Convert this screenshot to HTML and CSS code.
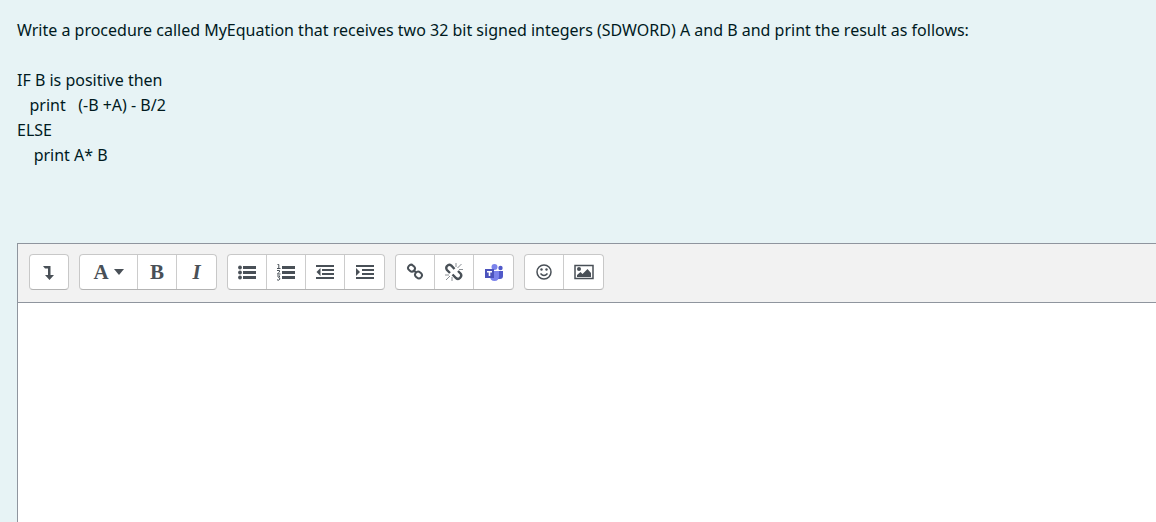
FILE: index.html
```
<!DOCTYPE html>
<html lang="en">
    <head>
        <title>Essay question</title>
        <meta charset="utf-8">
        <meta name="viewport" content="width=device-width, initial-scale=1">
        <link rel="stylesheet" href="styles.css">
    </head>

    <body>
        <div class="question">
            <p>Write a procedure called MyEquation that receives two 32 bit signed integers (SDWORD) A and B and print the result as follows:</p>
            <p class="code">IF B is positive then
   print   (-B +A) - B/2
ELSE
    print A* B</p>
        </div>

        <div class="editor">
            <div class="toolbar" role="toolbar" aria-label="Editor toolbar">
                <div class="group">
                    <button type="button" title="Show more buttons">
                        <svg width="18" height="18" viewBox="0 0 18 18"><path d="M3 3h7.500v9H14l-4.500 5L5 12h3V5.500H5z"/></svg>
                    </button>
                </div>
                <div class="group">
                    <button type="button" class="wide" title="Paragraph styles"><span class="letter">A</span><span class="caret"></span></button>
                    <button type="button" title="Bold"><span class="letter">B</span></button>
                    <button type="button" title="Italic"><span class="letter italic">I</span></button>
                </div>
                <div class="group">
                    <button type="button" title="Unordered list">
                        <svg width="20" height="18" viewBox="0 0 20 18"><path d="M6 3h13v3H6zM6 8h13v3H6zM6 13h13v3H6z"/><circle cx="3" cy="4.5" r="1.9"/><circle cx="3" cy="9.5" r="1.9"/><circle cx="3" cy="14.5" r="1.9"/></svg>
                    </button>
                    <button type="button" title="Ordered list">
                        <svg width="20" height="18" viewBox="0 0 20 18"><path d="M6 3h13v3H6zM6 8h13v3H6zM6 13h13v3H6z"/><path class="line" d="M1.5 1.500h1.300v4M1 5.500h3.500M1 7.500h2.500v1.500L1.300 11H4.500M1 13h3L2.500 14.500q1.700 0 1.300 1.700T1 16.800"/></svg>
                    </button>
                    <button type="button" title="Outdent">
                        <svg width="20" height="18" viewBox="0 0 20 18"><path d="M1 2h18v2H1zM7 6h12v2H7zM7 10h12v2H7zM1 14h18v2H1zM5.500 5v8L1.500 9z"/></svg>
                    </button>
                    <button type="button" title="Indent">
                        <svg width="20" height="18" viewBox="0 0 20 18"><path d="M1 2h18v2H1zM7 6h12v2H7zM7 10h12v2H7zM1 14h18v2H1zM1 5v8l4-4z"/></svg>
                    </button>
                </div>
                <div class="group">
                    <button type="button" title="Link">
                        <svg width="18" height="18" viewBox="0 0 18 18"><g class="thick"><rect x="2" y="2.200" width="7" height="6" rx="3" transform="rotate(42 5.500 5.200)"/><rect x="9" y="9" width="7" height="6" rx="3" transform="rotate(42 12.500 12)"/><path d="M7.500 7l3 3"/></g></svg>
                    </button>
                    <button type="button" title="Unlink">
                        <svg width="18" height="18" viewBox="0 0 18 18"><path class="heavy" d="M5 10L2 7Q.5 5 2 3q2-2 4.200-.5L9.500 6M13 8l2.500 2.500q1.700 2-.3 4.200t-4.200.3L7.500 11.500"/><path class="ray" d="M11 4V0M12.500 5l4-4M14 6.500h4M4 12H0M5 13l-4 4M7 14v4"/></svg>
                    </button>
                    <button type="button" title="Teams meeting">
                        <svg width="20" height="18" viewBox="0 0 20 18"><circle cx="16.500" cy="5" r="2.200" fill="#5059c9"/><path d="M13 8h6v5q0 3-3 3h-3z" fill="#5059c9"/><circle cx="10.500" cy="4" r="3" fill="#7b83eb"/><path d="M6 8h9v5q0 5-4.500 5T6 13z" fill="#7b83eb"/><path d="M1 6h9v9H1z" fill="#4b53bc"/><path d="M3 8h5v1.500H6.300V13H4.700V9.500H3z" fill="#fff"/></svg>
                    </button>
                </div>
                <div class="group">
                    <button type="button" title="Emoji picker">
                        <svg width="18" height="18" viewBox="0 0 18 18"><circle class="ring" cx="9" cy="9" r="7"/><circle cx="6.500" cy="6.500" r="1.200"/><circle cx="11.500" cy="6.500" r="1.200"/><path class="ring" d="M5.500 10.500q3.500 4 7 0"/></svg>
                    </button>
                    <button type="button" title="Insert image">
                        <svg width="20" height="18" viewBox="0 0 20 18"><path class="ring" d="M1 2.500h18v13H1z"/><circle cx="5" cy="6" r="2"/><path d="M3 14v-2l3.500-3 2 2 5-5 3.500 4v4z"/></svg>
                    </button>
                </div>
            </div>
            <textarea class="answer" aria-label="Answer text"></textarea>
        </div>
    </body>
</html>
```
FILE: styles.css
```
* {
    box-sizing: border-box;
}
body {
    display: flex;
    flex-direction: column;
    min-height: 100vh;
    margin: 0;
    padding: 18px 0 0 17px;
    background-color: #e7f3f5;
    color: #001a1e;
    font-family: "Segoe UI", "Noto Sans", sans-serif;
    font-size: 16px;
    line-height: 25px;
}
.question {
    margin-bottom: 75px;
}
.question p {
    margin: 0 0 25px;
}
.question .code {
    margin: 0;
    white-space: pre-wrap;
}
.editor {
    display: flex;
    flex: 1;
    flex-direction: column;
    border-top: 1px solid #8f959e;
    border-left: 1px solid #8f959e;
}
.toolbar {
    display: flex;
    flex-wrap: wrap;
    gap: 10px;
    padding: 10px 11px 12px;
    border-bottom: 1px solid #8f959e;
    background-color: #f2f2f2;
}
.group {
    display: flex;
    border: 1px solid #c8c8c8;
    border-bottom-color: #b3b3b3;
    border-radius: 4px;
    background-color: #fff;
}
.group button {
    display: flex;
    align-items: center;
    justify-content: center;
    width: 39px;
    height: 34px;
    padding: 0;
    border: 0;
    border-right: 1px solid #ccc;
    background: none;
    color: #495057;
    cursor: pointer;
}
.group button:last-child {
    border-right: 0;
}
.group button:only-child {
    width: 38px;
}
.group .wide {
    gap: 5px;
    width: 58px;
}
.letter {
    font-family: "Liberation Serif", serif;
    font-size: 21px;
    font-weight: bold;
    line-height: 24px;
}
.italic {
    font-style: italic;
}
.caret {
    border: 5px solid transparent;
    border-top: 6px solid #495057;
    border-bottom: 0;
}
svg {
    fill: #495057;
}
.line, .ring, .thick, .heavy, .ray {
    fill: none;
    stroke: #495057;
}
.ring {
    stroke-width: 1.5;
}
.thick {
    stroke-width: 2;
}
.heavy {
    stroke-width: 2.4;
}
.ray {
    stroke: #8a8f94;
}
.answer {
    flex: 1;
    min-height: 200px;
    padding: 8px;
    border: 0;
    outline: 0;
    background-color: #fff;
    color: inherit;
    font: inherit;
    resize: none;
}
```
